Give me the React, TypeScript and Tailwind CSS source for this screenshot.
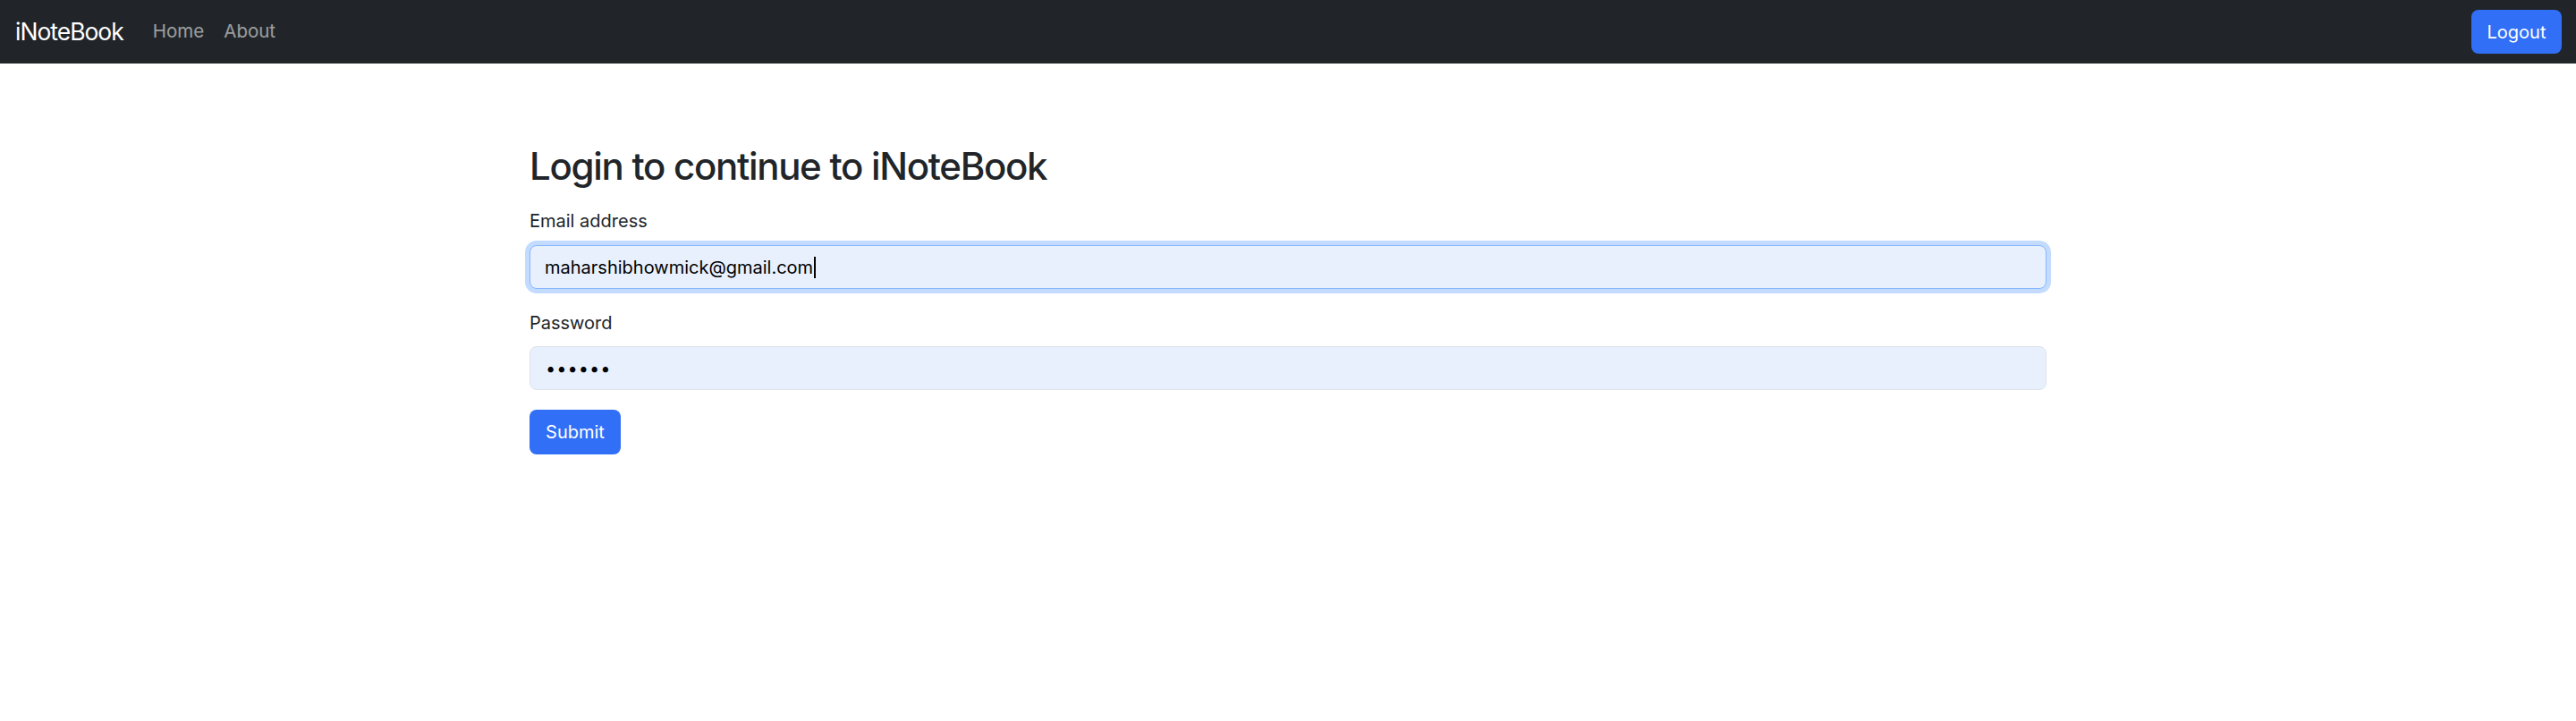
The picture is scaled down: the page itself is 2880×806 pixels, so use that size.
import React from "react";

const font = { fontFamily: "Inter, 'Noto Sans', 'Liberation Sans', sans-serif" };

function Navbar() {
  return (
    <nav className="flex h-[71px] items-center justify-between bg-[#212529] pl-[17px] pr-[16px]">
      <div className="flex items-center">
        <a href="#" className="mr-[22px] text-[26.5px] leading-[1.5] tracking-[-1px] text-white">
          iNoteBook
        </a>
        <ul className="flex items-center">
          <li>
            <a href="#" className="block px-[11px] text-[20.5px] leading-[1.5] text-white/55">
              Home
            </a>
          </li>
          <li>
            <a href="#" className="block px-[11px] text-[20.5px] leading-[1.5] text-white/55">
              About
            </a>
          </li>
        </ul>
      </div>
      <button className="flex h-[49px] w-[101px] items-center justify-center rounded-[8px] bg-[#316ff6] text-[20px] text-white">
        Logout
      </button>
    </nav>
  );
}

function LoginForm() {
  return (
    <div className="mx-auto w-[1696px] pt-[90px]">
      <h2 className="text-[42px] font-medium leading-[1.2] tracking-[-1.3px] text-[#212529]">
        Login to continue to iNoteBook
      </h2>
      <form className="mt-[21px]" onSubmit={(e) => e.preventDefault()}>
        <label className="block text-[20px] leading-[30px] text-[#212529]">Email address</label>
        <div className="mt-[12px] flex h-[49px] items-center rounded-[8px] border border-[#86b7fe] bg-[#e8f0fe] px-[16px] text-[20px] text-black shadow-[0_0_0_5px_rgba(13,110,253,0.25)]">
          <span>maharshibhowmick@gmail.com</span>
          <span className="ml-[1px] inline-block h-[24px] w-[2px] bg-black" />
        </div>
        <label className="mt-[23px] block text-[20px] leading-[30px] text-[#212529]">Password</label>
        <div className="mt-[11px] flex h-[49px] items-center rounded-[8px] border border-[#dde2ea] bg-[#e8f0fe] px-[17px] text-[20px] tracking-[1px] text-black">
          ••••••
        </div>
        <button
          type="submit"
          className="mt-[22px] flex h-[50px] w-[102px] items-center justify-center rounded-[8px] bg-[#316ff6] text-[20px] text-white"
        >
          Submit
        </button>
      </form>
    </div>
  );
}

export default function App() {
  return (
    <div className="min-h-[806px] bg-white" style={font}>
      <Navbar />
      <LoginForm />
    </div>
  );
}
